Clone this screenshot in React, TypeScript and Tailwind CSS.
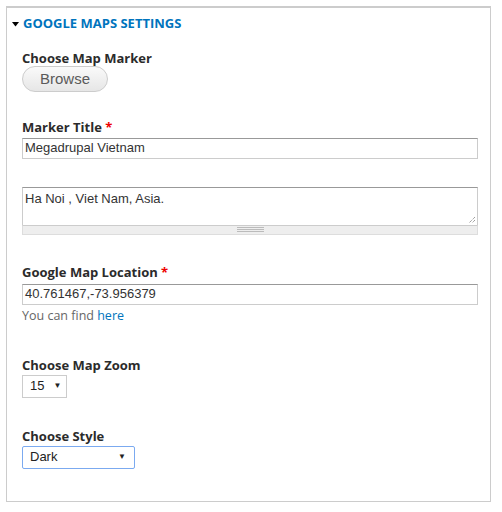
import React from "react";

const label = "block text-[13px] font-bold text-[#2b2b2b] leading-[16px]";
const lab = { fontFamily: '"Open Sans", "DejaVu Sans", sans-serif' };
const arial = { fontFamily: '"Liberation Sans", Arial, sans-serif' };

export default function App() {
  return (
    <div className="w-[502px] h-[512px] bg-white pt-[6px] pl-[6px]">
      <div className="w-[485px] h-[496px] border border-[#ccc] border-t-2 border-t-[#ccc] relative" style={lab}>
        <div className="flex items-center pl-[5px] pt-[5px] h-[26px]">
          <svg width="7" height="5" viewBox="0 0 7 5" className="mr-[4px] mt-[1px]">
            <path d="M0 0 H7 L3.5 4.5 Z" fill="#000" />
          </svg>
          <span className="text-[13px] font-bold text-[#0074bd] leading-none">GOOGLE MAPS SETTINGS</span>
        </div>
        <div className="pl-[15px] pr-[12px]">
          <div className="mt-[16px]">
            <span className={label}>Choose Map Marker</span>
            <button className="mt-[-1px] w-[86px] h-[26px] rounded-[13px] border border-[#ccc] bg-gradient-to-b from-[#fafafa] to-[#e6e6e6] text-[15px] text-[#5a5a5a] leading-none" style={arial}>
              Browse
            </button>
          </div>
          <div className="mt-[27px]">
            <span className={label}>
              Marker Title <span className="text-[#e00]">*</span>
            </span>
            <div className="mt-[3px] h-[21px] w-[456px] border border-[#ccc] border-t-[#999] bg-white flex items-center pl-[2px] text-[13px] text-[#333]" style={arial}>
              Megadrupal Vietnam
            </div>
          </div>
          <div className="mt-[28px] w-[456px]">
            <div className="h-[38px] border border-[#ccc] border-t-[#999] border-b-0 bg-white pl-[2px] pt-[3px] text-[13px] text-[#333] relative leading-[15px]" style={arial}>
              Ha Noi , Viet Nam, Asia.
              <svg width="8" height="8" viewBox="0 0 8 8" className="absolute right-[1px] bottom-[1px]">
                <path d="M7 1 L1 7 M7 4 L4 7" stroke="#777" strokeWidth="1" strokeDasharray="1 1" />
              </svg>
            </div>
            <div className="h-[10px] bg-[#eee] border border-[#ddd] border-t-[#ccc] flex flex-col items-center justify-center gap-[1px]">
              <div className="w-[27px] h-px bg-[#bbb]" />
              <div className="w-[27px] h-px bg-[#bbb]" />
              <div className="w-[27px] h-px bg-[#bbb]" />
            </div>
          </div>
          <div className="mt-[29px]">
            <span className={label}>
              Google Map Location <span className="text-[#e00]">*</span>
            </span>
            <div className="mt-[4px] h-[21px] w-[456px] border border-[#ccc] border-t-[#999] bg-white flex items-center pl-[2px] text-[13px] text-[#333]" style={arial}>
              40.761467,-73.956379
            </div>
            <div className="mt-[3px] text-[12.5px] text-[#666] leading-[15px]">
              You can find <span className="text-[#0074bd]">here</span>
            </div>
          </div>
          <div className="mt-[34px]">
            <span className={label}>Choose Map Zoom</span>
            <div className="mt-[2px] w-[45px] h-[23px] border border-[#ccc] flex items-center pl-[7px] text-[13px] text-[#222]" style={arial}>
              15
              <span className="ml-[9px] text-[8px]">▼</span>
            </div>
          </div>
          <div className="mt-[30px]">
            <span className={label}>Choose Style</span>
            <div className="mt-[2px] w-[113px] h-[23px] border border-[#7baaf0] rounded-[2px] flex items-center pl-[7px] pr-[8px] justify-between text-[13px] text-[#222]" style={arial}>
              Dark
              <span className="text-[8px]">▼</span>
            </div>
          </div>
        </div>
      </div>
    </div>
  );
}
